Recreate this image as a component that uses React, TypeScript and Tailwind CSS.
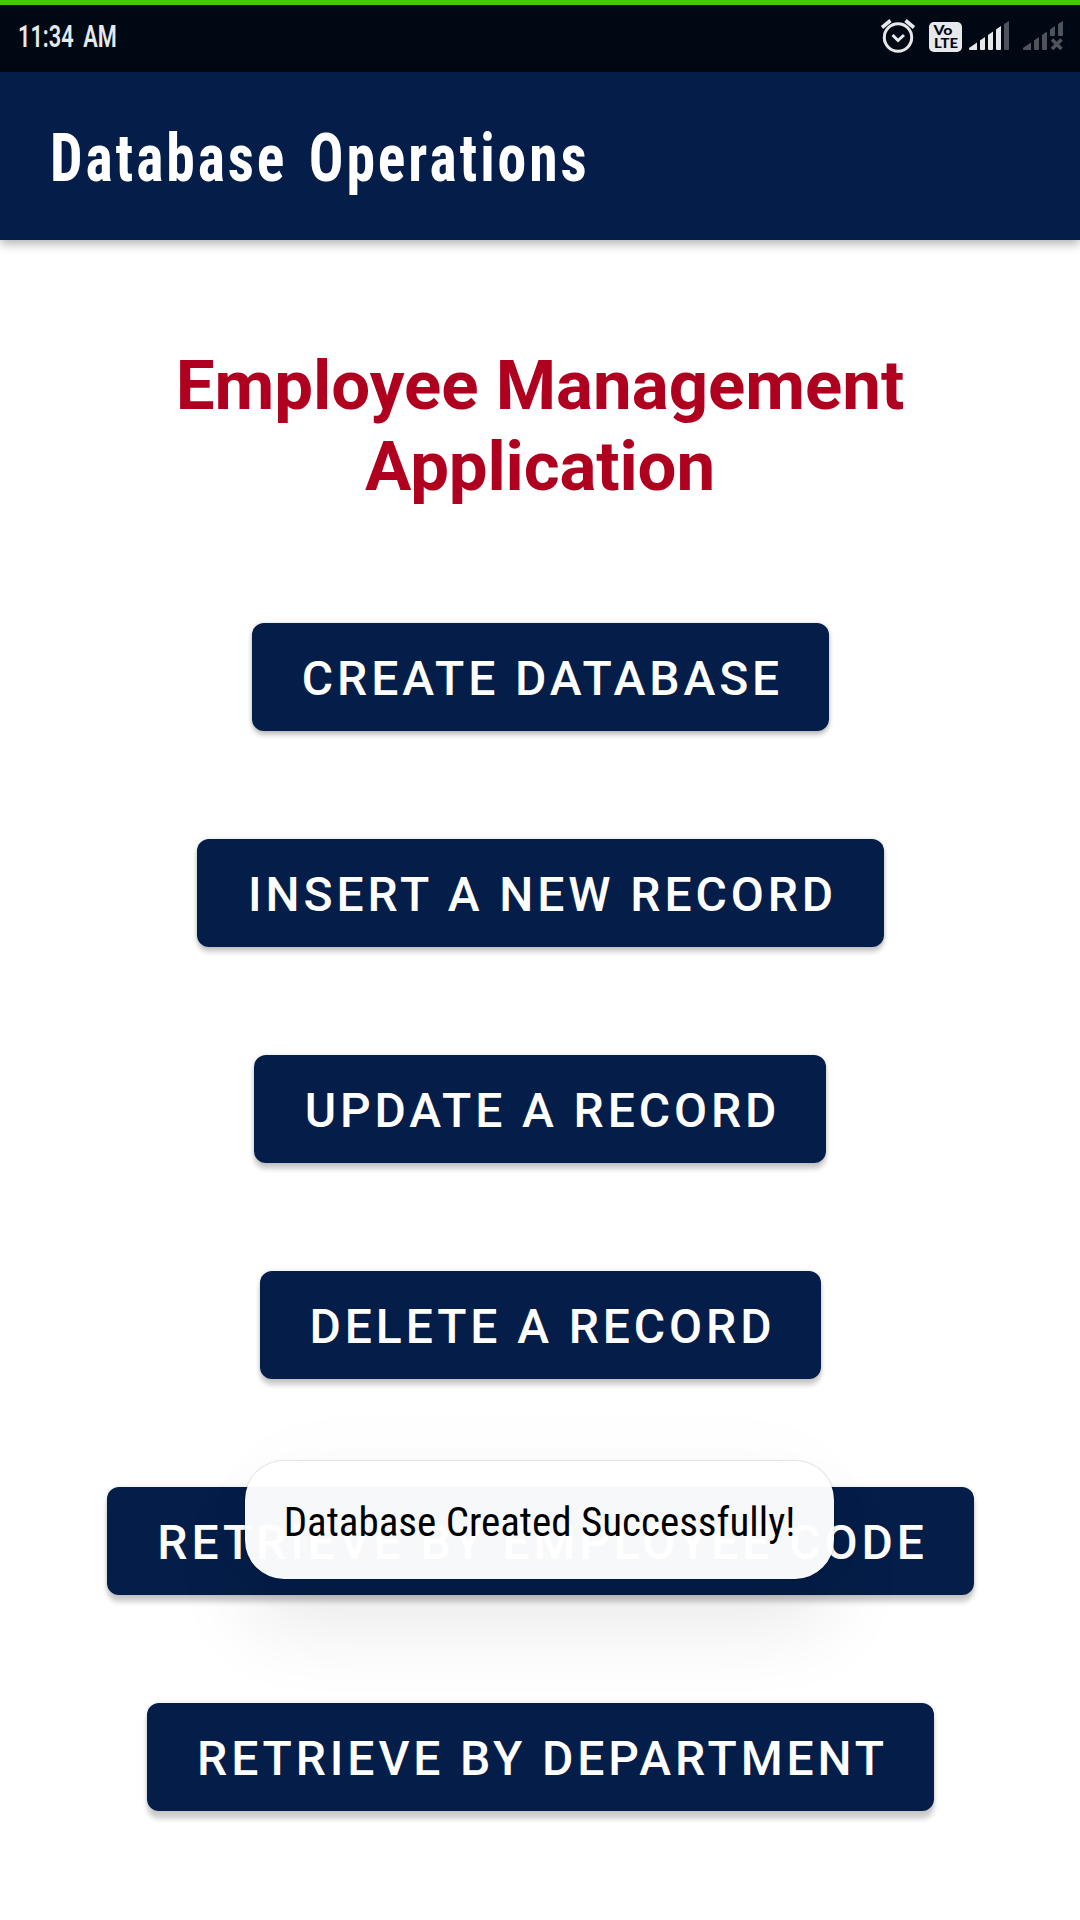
import React from "react";

const actions = [
  { label: "Create Database", style: "w-[577px] shadow-[0_4px_5px_rgba(0,0,0,0.22),0_0_4px_rgba(0,0,0,0.15)]" },
  { label: "Insert a new record", style: "w-[687px] shadow-[0_5px_5px_rgba(0,0,0,0.2),0_0_4px_rgba(0,0,0,0.14)]" },
  { label: "Update a record", style: "w-[572px] shadow-[0_6px_5px_rgba(0,0,0,0.2),0_0_4px_rgba(0,0,0,0.13)]" },
  { label: "Delete a record", style: "w-[561px] shadow-[0_6px_5px_rgba(0,0,0,0.2),0_0_4px_rgba(0,0,0,0.12)]" },
  { label: "Retrieve by employee code", style: "w-[867px] shadow-[0_7px_5px_rgba(0,0,0,0.2),0_0_4px_rgba(0,0,0,0.12)]" },
  { label: "Retrieve by department", style: "w-[787px] shadow-[0_8px_5px_rgba(0,0,0,0.19),0_0_4px_rgba(0,0,0,0.12)]" },
];

function AlarmIcon() {
  return (
    <svg className="h-9 w-9" viewBox="0 0 36 36" fill="none" stroke="#e6e8eb" strokeWidth="3">
      <circle cx="18" cy="19.5" r="13.7" />
      <path d="M12.5 17 18 22.500 24 17" strokeWidth="3" />
      <path d="M2 9.500 10.500 2.500M25.500 2.500 34 9.500" strokeWidth="3.6" />
    </svg>
  );
}

function VolteIcon() {
  return (
    <svg className="h-[30px] w-[33px]" viewBox="0 0 33 30">
      <rect width="33" height="30" rx="5" fill="#e6e8eb" />
      <g fill="#000814" fontFamily="Lato, sans-serif" fontWeight="900">
        <text x="4.500" y="13" fontSize="14" textLength="19" lengthAdjust="spacingAndGlyphs">Vo</text>
        <text x="5" y="25.500" fontSize="13.500" textLength="24" lengthAdjust="spacingAndGlyphs">LTE</text>
      </g>
    </svg>
  );
}

function SignalIcon() {
  return (
    <svg className="h-[30px] w-[41px]" viewBox="0 0 41 30" fill="#e6e8eb">
      <path d="M0 27 8 21.500V29H1Q0 29 0 28Z" />
      <path d="M11 19.500 16 16V28Q16 29 15 29H12Q11 29 11 28Z" />
      <path d="M19 14 24 10.500V28Q24 29 23 29H20Q19 29 19 28Z" />
      <path d="M27 8.500 32 5V28Q32 29 31 29H28Q27 29 27 28Z" />
      <path d="M35 3 40 0V28Q40 29 39 29H36Q35 29 35 28Z" fill="#4e535c" />
    </svg>
  );
}

function NoSignalIcon() {
  return (
    <svg className="h-[30px] w-[41px]" viewBox="0 0 41 30" fill="#4e535c">
      <path d="M0 27 8 21.500V29H1Q0 29 0 28Z" />
      <path d="M11 19.500 16 16V28Q16 29 15 29H12Q11 29 11 28Z" />
      <path d="M19 14 24 10.500V28Q24 29 23 29H20Q19 29 19 28Z" />
      <path d="M27 8.500 32 5V14Q32 15 31 15H28Q27 15 27 14Z" />
      <path d="M35 3 40 0V14Q40 15 39 15H36Q35 15 35 14Z" />
      <path d="M29 18.500 38.500 28M38.500 18.500 29 28" stroke="#4e535c" strokeWidth="3.6" />
    </svg>
  );
}

export default function App() {
  return (
    <div className="relative flex h-[1920px] w-[1080px] flex-col overflow-hidden bg-white font-['Roboto',sans-serif]">
      <div className="h-[5px] shrink-0 bg-[#4bc404]" />
      <div className="flex h-[67px] shrink-0 items-start justify-between bg-[#000814]">
        <div className="w-[99px] pl-[18px] pt-[13px] text-[#e6e8eb]">
          <span className="inline-block origin-left scale-x-[0.68] whitespace-pre text-[32px] leading-[36px] font-semibold [word-spacing:6px]">11:34 AM</span>
        </div>
        <div className="flex items-center pr-[16px] pt-[13px]">
          <AlarmIcon />
          <div className="ml-[13px] mt-[1px]"><VolteIcon /></div>
          <div className="ml-[7px]"><SignalIcon /></div>
          <div className="ml-[13px]"><NoSignalIcon /></div>
        </div>
      </div>
      <header className="z-10 flex h-[168px] shrink-0 items-start bg-[#051e49] pl-[50px] pt-[46px] shadow-[0_4px_10px_rgba(0,0,0,0.3)]">
        <h1 className="origin-left scale-x-[0.86] whitespace-nowrap text-[67px] leading-[80px] font-bold tracking-[3.4px] text-white [font-stretch:75%] [word-spacing:6px]">
          Database Operations
        </h1>
      </header>
      <main className="flex flex-col items-center pt-[105px]">
        <h2 className="text-center text-[69px] leading-[81px] font-bold text-[#b00020]">
          Employee Management
          <br />
          <span className="tracking-[-0.15px]">Application</span>
        </h2>
        <div className="mt-[116px] flex flex-col items-center gap-[108px]">
          {actions.map((a) => (
            <button
              key={a.label}
              className={`${a.style} flex h-[108px] items-center justify-center rounded-[12px] bg-[#051e49] pt-[4px] pl-[5px] text-[48px] font-medium tracking-[3.9px] whitespace-nowrap text-white uppercase`}
            >
              {a.label}
            </button>
          ))}
        </div>
      </main>
      <div className="absolute top-[1461px] left-[245px] flex h-[118px] w-[589px] items-center justify-center rounded-[39px] bg-white/[0.97] pt-[6px] shadow-[0_0_2px_rgba(0,0,0,0.35),0_50px_80px_0px_rgba(0,0,0,0.08),0_0_110px_rgba(0,0,0,0.02)]">
        <span className="text-[41px] whitespace-nowrap text-black [font-stretch:75%]">Database Created Successfully!</span>
      </div>
    </div>
  );
}
